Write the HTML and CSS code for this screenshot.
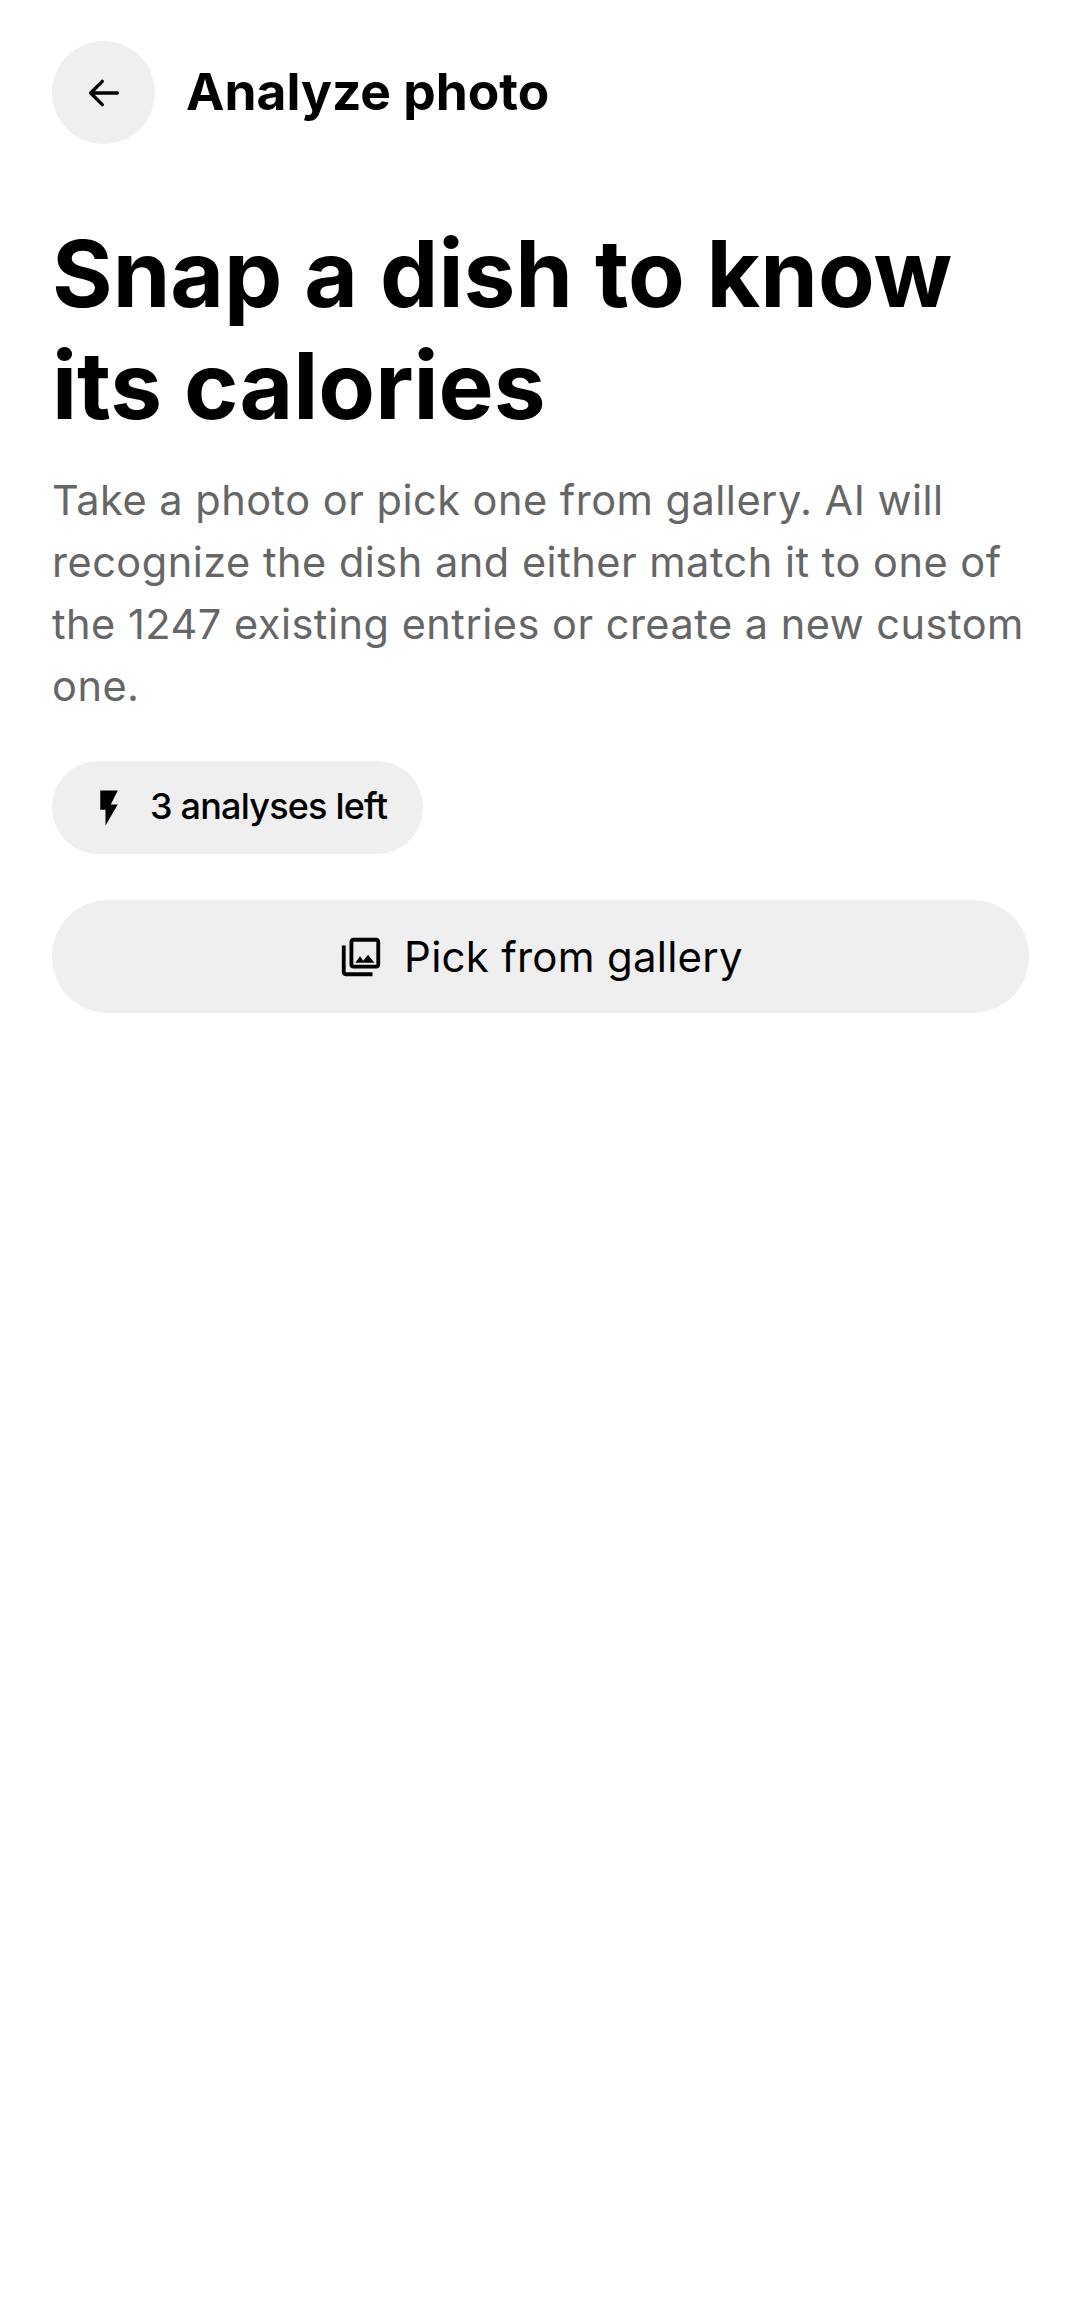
FILE: index.html
```html
<!DOCTYPE html>
<html lang="en">
<head>
<meta charset="utf-8">
<title>Analyze photo</title>
<link rel="stylesheet" href="styles.css">
</head>
<body>
<main class="screen">
  <header class="topbar">
    <button class="back" aria-label="Back">
      <svg class="back-icon" viewBox="0 0 24 24"><path d="M20 12H4.5M11 5l-7 7 7 7" fill="none" stroke="currentColor" stroke-width="2" stroke-linecap="round" stroke-linejoin="round"/></svg>
    </button>
    <span class="title">Analyze photo</span>
  </header>
  <h1 class="headline">Snap a dish to know its calories</h1>
  <p class="desc">Take a photo or pick one from gallery. AI will recognize the dish and either match it to one of the 1247 existing entries or create a new custom one.</p>
  <div class="chip">
    <svg class="chip-icon" viewBox="0 0 24 24"><path d="M7 2v11h3v9l7-12h-4l4-8z" fill="currentColor"/></svg>
    <span class="chip-label">3 analyses left</span>
  </div>
  <button class="cta">
    <svg class="cta-icon" viewBox="0 0 24 24"><path fill="currentColor" d="M20 4v12H8V4h12m0-2H8c-1.1 0-2 .9-2 2v12c0 1.1.9 2 2 2h12c1.1 0 2-.9 2-2V4c0-1.1-.9-2-2-2zm-8.5 9.67l1.69 2.26 2.48-3.1L19 15H9zM2 6v14c0 1.1.9 2 2 2h14v-2H4V6H2z"/></svg>
    <span>Pick from gallery</span>
  </button>
</main>
</body>
</html>
```
FILE: styles.css
```css
* { box-sizing: border-box; }
html, body { margin: 0; background: #fff; }
body { font-family: Inter, sans-serif; color: #000; }
.screen { width: 1080px; height: 2314px; padding: 41px 52px 0; display: flex; flex-direction: column; overflow: hidden; }
.topbar { display: flex; align-items: center; gap: 31px; }
.back { width: 103px; height: 103px; border: 0; padding: 0; border-radius: 50%; background: #efefef; color: #000; display: flex; align-items: center; justify-content: center; }
.back-icon { width: 40px; height: 40px; }
.title { font-size: 51.5px; font-weight: 700; line-height: 58px; padding-bottom: 3px; }
.headline { margin: 73px 0 0; font-size: 92.6px; font-weight: 700; line-height: 112px; letter-spacing: 0; }
.desc { margin: 28px 0 0; font-size: 41.5px; line-height: 62px; color: #666; letter-spacing: 0.5px; }
.chip { margin-top: 44px; align-self: flex-start; height: 93px; padding: 0 36px; border-radius: 47px; background: #efefef; display: flex; align-items: center; gap: 20px; font-size: 36px; font-weight: 500; letter-spacing: -0.8px; }
.chip-label { padding-bottom: 3px; }
.chip-icon { width: 42px; height: 42px; }
.cta { margin-top: 46px; width: 977px; height: 113px; border: 0; border-radius: 56px; background: #efefef; color: #000; display: flex; align-items: center; justify-content: center; gap: 20px; font-family: inherit; font-size: 42px; letter-spacing: 0.25px; }
.cta-icon { width: 46px; height: 46px; }
```
